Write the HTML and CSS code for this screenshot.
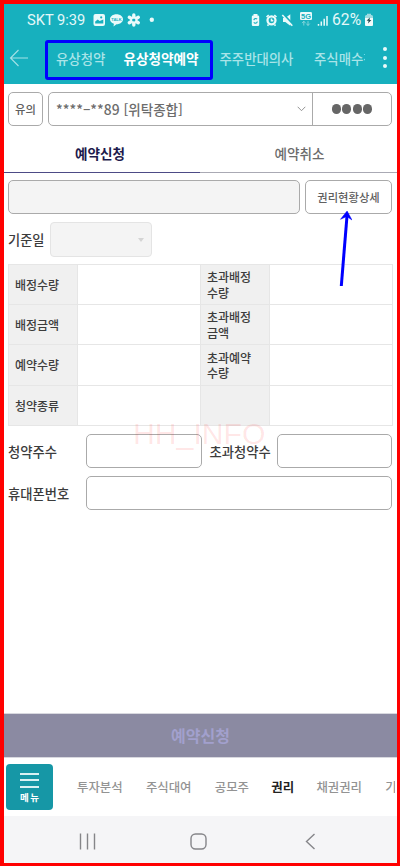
FILE: index.html
```
<!DOCTYPE html>
<html lang="ko">
<head>
<meta charset="utf-8">
<title>유상청약예약</title>
<link rel="stylesheet" href="styles.css">
</head>
<body>
<div class="frame">
  <header class="header">
    <div class="status">
      <span class="clock">SKT 9:39</span>
      <svg class="status-left" width="64" height="16" viewBox="0 0 64 16">
        <rect x="0.5" y="2" width="11.5" height="12" rx="2" fill="#eafafa"/>
        <path d="M2.2 11.5V9.5l2.5-2 2 1.6 3.6-1.5v3.9z" fill="#17b0be"/>
        <circle cx="8.2" cy="5.4" r="1.1" fill="#17b0be"/>
        <path d="M23.5 2.2c3.7 0 6.5 2.2 6.500 5s-2.800 5-6.500 5l-3 2.300.4-2.700c-2.400-.8-3.900-2.500-3.900-4.600 0-2.800 2.800-5 6.500-5z" fill="#eafafa"/>
        <text x="23.500" y="8.800" text-anchor="middle" class="talk">TALK</text>
        <g stroke="#eafafa" stroke-width="3.400" stroke-linecap="round"><path d="M40.800 3v2M40.800 11V13M36.300 5.300l1.700 1M43.600 9.700l1.700 1M36.300 10.700l1.700-1M43.600 6.300l1.700-1"/></g>
        <circle cx="40.800" cy="8" r="2.700" fill="none" stroke="#eafafa" stroke-width="1.600"/>
        <circle cx="58.800" cy="7.800" r="2.200" fill="#eafafa"/>
      </svg>
      <svg class="status-right" width="80" height="16" viewBox="0 0 80 16">
        <path d="M2.500 3.500V2h4v1.500H7q1.200 0 1.200 1.200v8q0 1.300-1.200 1.300H2q-1.200 0-1.200-1.300v-8Q.8 3.500 2 3.500z" fill="#eafafa"/>
        <path d="M2.800 8.200a1.900 1.900 0 0 1 3.300-1M6.300 9.500a1.900 1.900 0 0 1-3.500.8" fill="none" stroke="#17b0be" stroke-width="1.100"/>
        <circle cx="20.500" cy="8.300" r="4" fill="none" stroke="#eafafa" stroke-width="2.300"/>
        <path d="M20.500 6.500v2.300h1.800M15.500 5l2.200-2M25.500 5l-2.200-2M17.500 12.500l-1 1.300M23.500 12.500l1 1.300" fill="none" stroke="#eafafa" stroke-width="1.600"/>
        <path d="M32 6h2.300l5-3.700v11.400L34.300 10H32z" fill="#eafafa"/>
        <path d="M31.500 1.500l11 11.500" stroke="#17b0be" stroke-width="2"/><path d="M31.300 3l10 10.700" stroke="#eafafa" stroke-width="1.600"/>
        <rect x="49" y="0" width="12" height="8" rx="1.300" fill="#eafafa"/>
        <text x="55" y="6.700" text-anchor="middle" class="five-g">5G</text>
        <path d="M52.800 13.500V9.200m-1.700 1.900 1.700-1.900 1.700 1.900M57 9.200v4.300m-1.700-1.900L57 13.500l1.700-1.900" fill="none" stroke="#8fd8de" stroke-width=".9"/>
        <path d="M67.500 13.700v-1.800M70.300 13.700V9.400M73.200 13.700V6.800M76 13.700V4" stroke="#eafafa" stroke-width="1.500"/>
      </svg>
      <span class="battery-text">62%</span>
      <svg class="battery" width="8" height="14" viewBox="0 0 8 14">
        <path d="M2 2V.8h4V2h.6Q8 2 8 3.500v8Q8 13 6.600 13H1.400Q0 13 0 11.500v-8Q0 2 1.400 2z" fill="#9edce1"/>
        <path d="M0 5h8v6.500Q8 13 6.600 13H1.400Q0 13 0 11.500z" fill="#f2fbfb"/>
        <path d="M4.800 4.500 1.600 7.700h2L3 10.500l3.400-3.600H4.600z" fill="#244a4d"/>
      </svg>
    </div>
    <nav class="top-nav">
      <svg class="back" width="20" height="18" viewBox="0 0 20 18"><path d="M9.500 1 1.500 9l8 8M1.500 9H19" fill="none" stroke="#a6e1e6" stroke-width="1.100"/></svg>
      <div class="top-tabs">
        <span class="t1">유상청약</span><span class="t2">유상청약예약</span><span class="t3">주주반대의사</span><span class="t4">주식매수청구</span>
      </div>
      <div class="more"><i></i><i></i><i></i></div>
      <div class="highlight"></div>
    </nav>
  </header>

  <main class="content">
    <div class="account-row">
      <button class="notice">유의</button>
      <div class="account">
        <span class="number">****–**89 <b>[위탁종합]</b></span>
        <svg class="chev" width="9" height="6" viewBox="0 0 9 6"><path d="M.7.8 4.500 4.700 8.300.8" fill="none" stroke="#888" stroke-width=".9"/></svg>
        <div class="password"><i></i><i></i><i></i><i></i></div>
      </div>
    </div>
    <div class="tabs"><span class="tab active">예약신청</span><span class="tab">예약취소</span></div>
    <div class="search-row"><div class="field disabled"></div><button class="detail">권리현황상세</button></div>
    <div class="date-row"><span>기준일</span><div class="select"></div></div>
    <div class="grid">
      <div class="th">배정수량</div><div class="td"></div><div class="th">초과배정<br>수량</div><div class="td"></div>
      <div class="th">배정금액</div><div class="td"></div><div class="th">초과배정<br>금액</div><div class="td"></div>
      <div class="th">예약수량</div><div class="td"></div><div class="th">초과예약<br>수량</div><div class="td"></div>
      <div class="th">청약종류</div><div class="td"></div><div class="th"></div><div class="td"></div>
    </div>
    <div class="form-row"><span class="label">청약주수</span><div class="field"></div><span class="label second">초과청약수</span><div class="field"></div></div>
    <div class="form-row last"><span class="label">휴대폰번호</span><div class="field"></div></div>
  </main>

  <button class="submit">예약신청</button>
  <nav class="bottom-nav">
    <div class="menu"><i></i><i></i><i></i><span>메뉴</span></div>
    <div class="bottom-tabs"><span>투자분석</span><span>주식대여</span><span>공모주</span><span class="on">권리</span><span>채권권리</span><span>기타</span></div>
  </nav>
  <div class="system-nav">
    <svg width="17" height="17" viewBox="0 0 17 17"><path d="M1.500.5v16M8.500.5v16M15.500.5v16" stroke="#858589" stroke-width="1.400"/></svg>
    <svg class="home" width="17" height="17" viewBox="0 0 17 17"><rect x="1" y="1" width="15" height="15" rx="4.500" fill="none" stroke="#858589" stroke-width="1.400"/></svg>
    <svg width="11" height="17" viewBox="0 0 11 17"><path d="M9.500 1 1.500 8.500l8 7.500" fill="none" stroke="#858589" stroke-width="1.400"/></svg>
  </div>
</div>
<div class="watermark">HH_INFO</div>
<svg class="pointer" width="14" height="76" viewBox="0 0 14 76"><path d="M3.300 75 9 5" stroke="#00f" stroke-width="3"/><path d="M9.100 0 14 9 8.800 5.500 2.500 8.300z" fill="#00f" stroke="#00f" stroke-width=".5"/></svg>
</body>
</html>
```

FILE: styles.css
```
* { box-sizing: border-box; }
body {
  margin: 0;
  position: relative;
  width: 400px;
  height: 866px;
  overflow: hidden;
  font-family: "Noto Sans CJK KR", sans-serif;
  font-weight: 500;
  color: #3c3c3c;
}
button { font-family: inherit; font-weight: 500; padding: 0; margin: 0; }
svg { display: block; flex: none; }
.frame {
  width: 400px;
  height: 866px;
  border: 4px solid #f00;
  border-right-width: 3px;
  border-bottom-width: 3px;
  display: flex;
  flex-direction: column;
  background: #fff;
}
.header { height: 80px; background: #17b0be; flex: none; }
.status {
  height: 31px;
  display: flex;
  align-items: center;
  padding-left: 23px;
  color: #e4f8f9;
}
.clock, .battery-text { font-family: Roboto, sans-serif; white-space: nowrap; font-size: 15px; line-height: 16px; font-weight: 400; }
.clock { width: 66px; font-size: 14.700px; }
.status-right { margin-left: 94px; }
.battery-text { margin-left: 1px; width: 33px; font-size: 15.700px; }
.talk { font: bold 4px "Liberation Sans", sans-serif; fill: #17b0be; }
.five-g { font: bold 7.5px "Liberation Sans", sans-serif; fill: #17b0be; }
.top-nav {
  position: relative;
  height: 45px;
  display: flex;
  align-items: center;
  padding-left: 5px;
}
.top-tabs {
  margin-left: 27px;
  width: 309px;
  display: flex;
  overflow: hidden;
  white-space: nowrap;
  font-size: 13.4px;
  line-height: 24px;
  color: #a9e4e8;
}
.top-tabs span { flex: none; }
.t1 { width: 67.5px; }
.t2 { width: 96px; color: #fff; font-weight: 700; font-size: 13.600px; }
.t3 { width: 94.5px; }
.more { margin-left: 18px; height: 21px; display: flex; flex-direction: column; justify-content: space-between; }
.more i { width: 4px; height: 4px; border-radius: 50%; background: #eafafa; }
.highlight { position: absolute; left: 41px; top: 5px; width: 168px; height: 40px; border: 3px solid #00f; border-radius: 3px; }

.content { padding: 8px 5px 0 4px; }
.account-row { display: flex; gap: 5px; height: 34px; }
.notice, .detail { border: 1px solid #aaa; border-radius: 5px; background: #fff; color: #606060; }
.notice { width: 35px; font-size: 11.3px; }
.account { flex: 1; display: flex; align-items: center; border: 1px solid #aaa; border-radius: 5px; padding-left: 7px; color: #6c6c6c; }
.number { flex: 1; font-size: 13.900px; white-space: nowrap; }
.number b { font-weight: 500; font-size: 13.5px; }
.chev { margin-right: 6px; }
.password { width: 79px; align-self: stretch; border-left: 1px solid #aaa; display: flex; align-items: center; justify-content: center; gap: 1.300px; }
.password i { width: 9.200px; height: 9.200px; border-radius: 50%; background: #666; }
.tabs { display: flex; height: 46px; margin: 0 -5px 0 -4px; }
.tab { flex: 1; text-align: center; font-size: 13.6px; line-height: 54px; height: 47px; color: #6c6c6c; border-bottom: 1px solid #aaaab4; }
.tab.active { flex: 0 0 196px; padding-right: 4px; color: #1d1a4c; font-weight: 700; border-color: #4d4b86; }
.tab:last-child { padding-left: 2px; }
.search-row { display: flex; gap: 5px; margin-top: 8px; height: 34px; }
.field { flex: 1; border: 1px solid #aaa; border-radius: 5px; background: #fff; }
.disabled { background: #f4f4f4; }
.detail { width: 87px; font-size: 11.3px; }
.date-row { display: flex; align-items: center; height: 35px; margin-top: 8px; font-size: 13.2px; }
.date-row span { width: 42px; white-space: nowrap; }
.select { width: 102px; height: 35px; border: 1px solid #e4e4e4; border-radius: 4px; background: #f4f4f4; display: flex; align-items: center; justify-content: flex-end; padding-right: 7px; }
.select::after { content: ""; border: 3px solid transparent; border-top: 4px solid #d4d4d4; border-bottom: 0; }
.grid {
  margin-top: 7px;
  display: grid;
  grid-template-columns: 69px 123px 69px 123px;
  grid-template-rows: 40px 40px 41px 40px;
  border: solid #e6e6e6;
  border-width: 1px 0 0 1px;
  height: 162px;
  width: 385px;
}
.th, .td { border: solid #e6e6e6; border-width: 0 1px 1px 0; }
.th { background: #f0f0f0; padding-left: 6px; font-size: 12px; line-height: 15.300px; display: flex; align-items: center; white-space: nowrap; }
.form-row { display: flex; align-items: center; height: 34px; margin-top: 8px; font-size: 13.300px; }
.form-row .field { height: 34px; }
.label { width: 78px; white-space: nowrap; }
.second { width: 75px; padding-left: 8px; }
.submit { margin-top: auto; height: 45px; flex: none; border: solid #d8d8df; border-width: 1px 0; background: #8b8aa2; color: #a2a0cd; font-size: 16px; font-weight: 700; line-height: 40px; padding-bottom: 2px; }
.bottom-nav { height: 58px; flex: none; display: flex; align-items: center; padding-left: 2px; }
.menu { width: 47px; height: 46px; border-radius: 4px; background: #1697a6; display: flex; flex-direction: column; align-items: center; padding-top: 9px; flex: none; }
.menu i { width: 19px; height: 2px; margin-bottom: 4.300px; background: #d9f1f3; flex: none; }
.menu span { color: #fff; font-size: 9.500px; line-height: 10px; font-weight: 700; letter-spacing: 1.500px; margin-right: -1.500px; }
.bottom-tabs { margin-left: 24px; flex: 0 0 318px; display: flex; gap: 23.300px; overflow: hidden; white-space: nowrap; font-size: 12.400px; color: #939393; }
.bottom-tabs span { flex: none; }
.bottom-tabs .on { color: #222; font-weight: 700; margin: 0 -1px; }
.system-nav { height: 47px; flex: none; background: #f5f5f7; display: flex; align-items: center; padding: 4px 81px 0 75px; justify-content: space-between; }
.home { margin-right: 4px; }
.watermark { position: absolute; left: 133px; top: 417px; font: 30.200px/34px "Liberation Sans", sans-serif; color: rgba(255, 0, 0, .1); }
.pointer { position: absolute; left: 338px; top: 211px; }
```
